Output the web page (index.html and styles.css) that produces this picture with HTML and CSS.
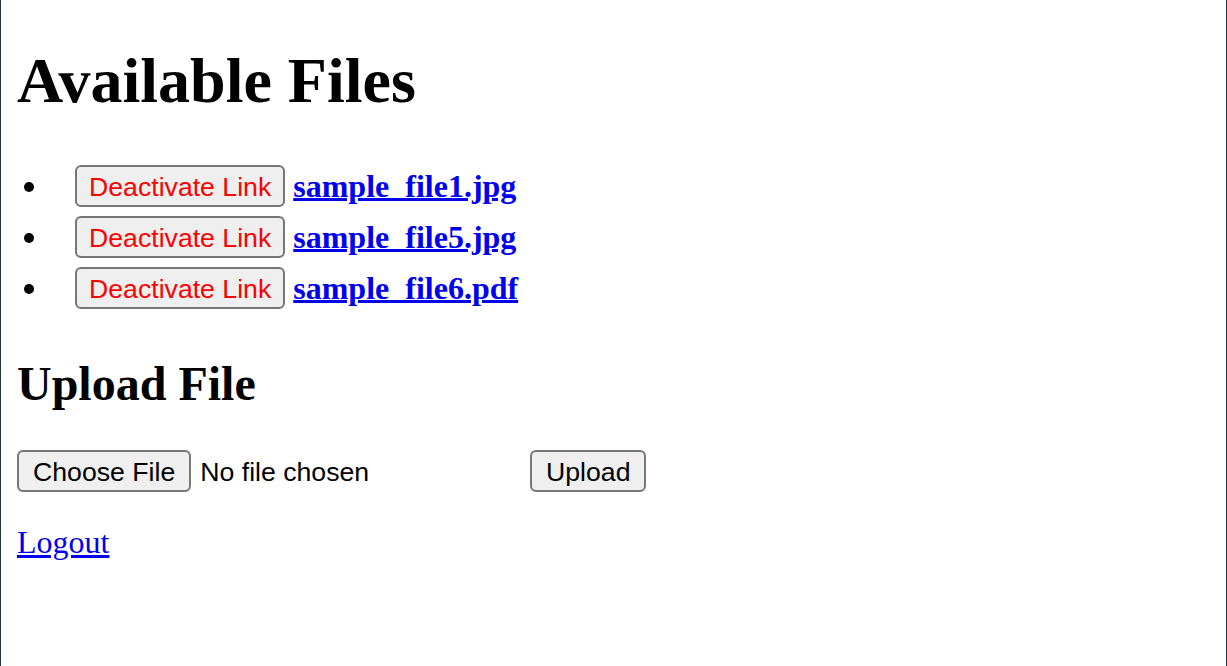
FILE: index.html
```html
<!DOCTYPE html>
<html lang="en">
<head>
<meta charset="utf-8">
<title>Available Files</title>
<link rel="stylesheet" href="styles.css">
</head>
<body>
<h1>Available Files</h1>
<ul class="file-list">
  <li><button class="btn btn-danger" type="button">Deactivate Link</button> <a class="file-link" href="#">sample_file1.jpg</a></li>
  <li><button class="btn btn-danger" type="button">Deactivate Link</button> <a class="file-link" href="#">sample_file5.jpg</a></li>
  <li><button class="btn btn-danger" type="button">Deactivate Link</button> <a class="file-link" href="#">sample_file6.pdf</a></li>
</ul>
<h2>Upload File</h2>
<form class="upload-form">
  <span class="file-picker"><button class="btn btn-wide" type="button">Choose File</button><span class="file-status">No file chosen</span></span> <button class="btn btn-wide" type="submit">Upload</button>
</form>
<p class="logout"><a href="#">Logout</a></p>
</body>
</html>
```
FILE: styles.css
```css
html {
  min-height: 100%;
  border-left: 1px solid #203445;
  border-right: 1px solid #203445;
  background: #ffffff;
}

body {
  margin: 16px;
  font-family: "Liberation Serif", "Times New Roman", serif;
  font-size: 32px;
  color: #000000;
}

h1 {
  font-size: 64px;
  font-weight: bold;
  margin: 27.88px 0 42.88px;
}

h2 {
  font-size: 48px;
  font-weight: bold;
  margin: 41.84px 0 39.84px;
}

.file-list {
  margin: 32px 0;
  padding-left: 33px;
}

.file-list li {
  list-style: disc;
}

.file-list .btn {
  margin: 4.5px 0 4.5px 25px;
}

.file-link {
  font-weight: bold;
  color: #0000ee;
}

.btn {
  font-family: "Liberation Sans", Arial, sans-serif;
  font-size: 26.67px;
  color: #000000;
  background: #efefef;
  border: 2px solid #767676;
  border-radius: 6px;
  padding: 5px 12px 2px;
}

.btn-wide {
  padding-left: 14px;
  padding-right: 14px;
}

.btn-danger {
  color: #ff0000;
}

.upload-form {
  margin: 0;
}

.file-picker {
  display: inline-block;
  width: 505px;
  font-family: "Liberation Sans", Arial, sans-serif;
  font-size: 26.67px;
}

.file-status {
  margin-left: 9px;
}

.logout {
  margin: 32px 0;
}

.logout a {
  color: #0000ee;
}
```
